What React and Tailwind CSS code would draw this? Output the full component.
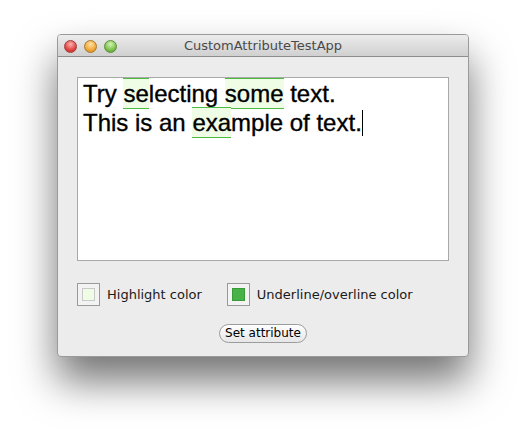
import React from "react";

const ui = { fontFamily: '"Lucida Grande", "DejaVu Sans", sans-serif' };
const helv = { fontFamily: '"Liberation Sans", Arial, sans-serif' };

function Mark({ children }) {
  return (
    <span className="bg-[#effde6] border-t border-b border-[#4cbb3f] py-[1px]">{children}</span>
  );
}

export default function App() {
  return (
    <div className="w-[526px] h-[437px] bg-white pt-[34px] pl-[57px]">
      <div className="w-[412px] h-[323px] flex flex-col rounded-[4px] bg-[#ececec] border border-[#9a9a9a] shadow-[0_24px_40px_rgba(0,0,0,0.55)] overflow-hidden">
        <div className="h-[22px] flex items-center relative bg-gradient-to-b from-[#ececec] to-[#d0d0d0] border-b border-[#8e8e8e]">
          <div className="flex gap-[7px] pl-[6px] pt-[1px]">
            <span className="block w-[13px] h-[13px] rounded-full border border-[#a23b3b] bg-[radial-gradient(circle_at_50%_30%,#ffb3b3,#e2443f_60%,#b82727)]" />
            <span className="block w-[13px] h-[13px] rounded-full border border-[#a8792a] bg-[radial-gradient(circle_at_50%_30%,#ffe2a6,#f1a83a_60%,#c98218)]" />
            <span className="block w-[13px] h-[13px] rounded-full border border-[#5d8f3a] bg-[radial-gradient(circle_at_50%_30%,#d4f5b6,#7cc14d_60%,#4e9a2b)]" />
          </div>
          <div className="absolute inset-0 flex items-center justify-center text-[13px] text-[#4a4a4a]" style={ui}>
            CustomAttributeTestApp
          </div>
        </div>
        <div className="flex flex-col px-[19px] pt-[20px]">
          <div className="h-[184px] bg-white border border-[#a9a9a9] pl-[5px] pt-[1px] text-[24px] leading-[29px] text-black [-webkit-text-stroke:0.35px_black]" style={helv}>
            <div>
              Try <Mark>se</Mark>lecting <Mark>some</Mark> text.
            </div>
            <div>
              This is an <Mark>exa</Mark>mple of text.
              <span className="inline-block w-px h-[26px] bg-black align-[-5px]" />
            </div>
          </div>
          <div className="flex items-center mt-[22px] text-[13px] text-[#1a1a1a]" style={ui}>
            <div className="w-[23px] h-[23px] border border-[#9a9a9a] bg-[#f3f3f3] flex items-center justify-center">
              <span className="block w-[13px] h-[13px] bg-[#effde6] border border-[#c9c9c9]" />
            </div>
            <span className="ml-[7px]">Highlight color</span>
            <div className="ml-[25px] w-[23px] h-[23px] border border-[#9a9a9a] bg-[#f3f3f3] flex items-center justify-center">
              <span className="block w-[13px] h-[13px] bg-[#47b247] border border-[#3a9a3a]" />
            </div>
            <span className="ml-[7px]">Underline/overline color</span>
          </div>
          <div className="flex justify-center mt-[18px]">
            <button className="h-[19px] px-[5px] rounded-full border border-[#9c9c9c] bg-gradient-to-b from-white to-[#e6e6e6] text-[12px] leading-[17px] text-black" style={ui}>
              Set attribute
            </button>
          </div>
        </div>
      </div>
    </div>
  );
}
